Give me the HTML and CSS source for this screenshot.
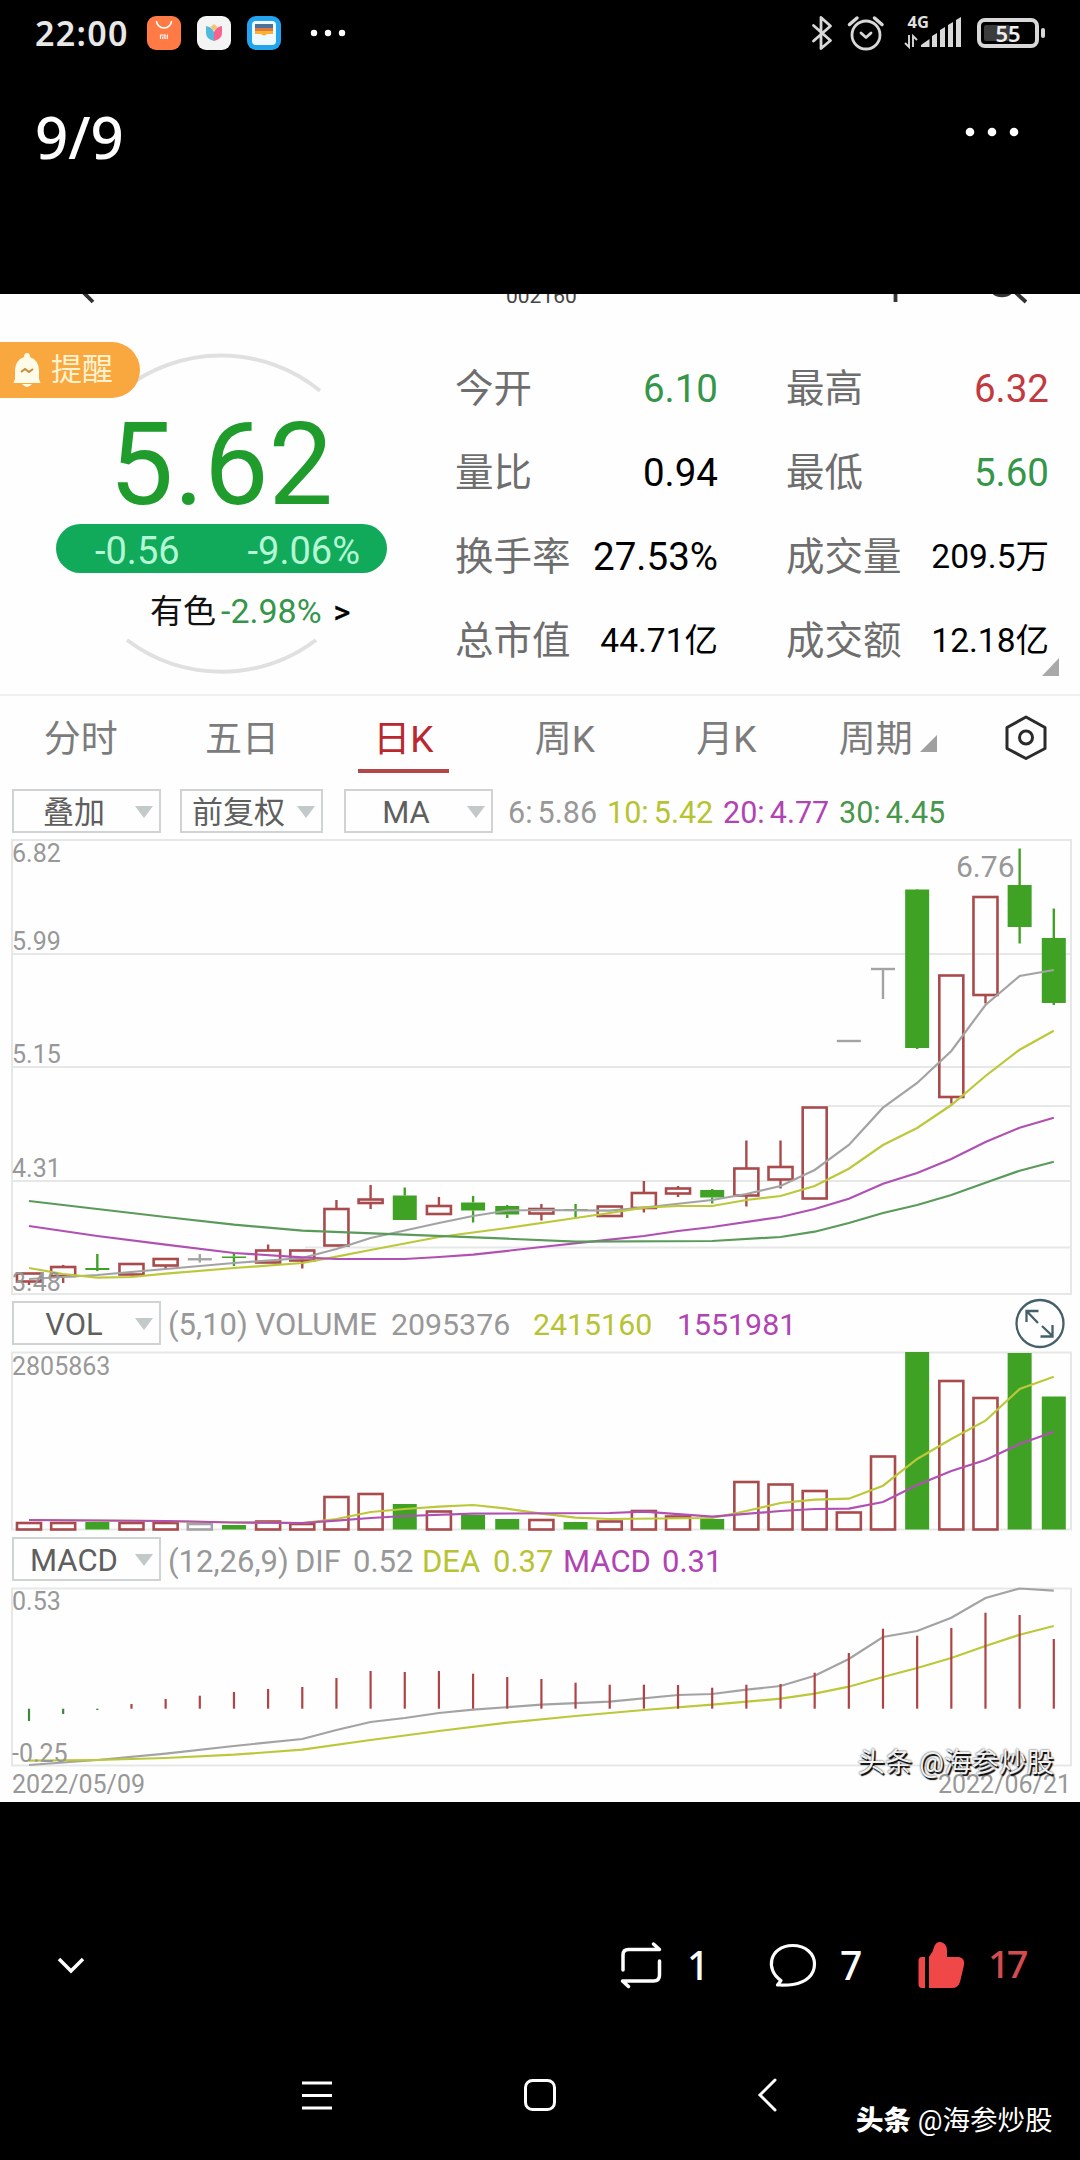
FILE: index.html
```html
<!DOCTYPE html>
<html lang="zh-CN">
<head>
    <meta charset="UTF-8">
    <meta name="viewport" content="width=device-width, initial-scale=1.0">
    <title>002160 日K</title>
    <link rel="stylesheet" href="styles.css">
</head>
<body>

    <!-- Barra de estado -->
    <div class="status-bar">
        <span class="clock">22:00</span>
        <svg class="apps" width="210" height="40" viewBox="140 13 210 40">
            <rect x="147" y="16" width="34" height="34" rx="9" fill="#ff7a45"/>
            <path d="M156.500 21a7.500 7 0 0 0 15 0" fill="none" stroke="#fff" stroke-width="1.600"/>
            <path d="M160.500 39v-4h4.500v4M162.800 36.500v2.500M167.300 34.500v4.500" fill="none" stroke="#fff" stroke-width="1.200"/>
            <rect x="197" y="16" width="34" height="34" rx="9" fill="#f4f4f4"/>
            <path d="M206 26q6 1 8 6v9q-8-2-8-8z" fill="#52b9dd"/>
            <path d="M222 26q-6 1-8 6v9q8-2 8-8z" fill="#f9628e"/>
            <path d="M210.500 27l3.500-3 3.500 3-3.500 4z" fill="#f6c56b"/>
            <rect x="247" y="16" width="34" height="34" rx="9" fill="#22a4ef"/>
            <rect x="252" y="21" width="24" height="24" rx="4" fill="#eefaff"/>
            <path d="M255 24h18v4h-18z" fill="#4f6f9c"/>
            <path d="M255 28h18v3h-18z" fill="#d97b3a"/>
            <path d="M255 31h18v3h-6q-3 3-6 0h-6z" fill="#fbb12f"/>
            <g fill="#fff"><circle cx="314" cy="33" r="3.200"/><circle cx="328" cy="33" r="3.200"/><circle cx="342" cy="33" r="3.200"/></g>
        </svg>
        <svg class="system" width="250" height="40" viewBox="800 13 250 40">
            <g fill="none" stroke="#d8d8d8" stroke-width="2.800" stroke-linecap="round" stroke-linejoin="round">
                <path d="M813.500 25.500l17 15-9.500 8v-31l9.500 8.500-17 15"/>
                <circle cx="866" cy="35" r="14"/>
                <path d="M861 33l5 4.500 5-4.500"/>
                <path d="M849.500 24.500l7.500-6.500M874.500 18l7.500 6.500" stroke-width="3.500"/>
            </g>
            <text class="net" x="907.500" y="28">4G</text>
            <path d="M909 35v12l-4-4M913 47V36l4 4" fill="none" stroke="#d8d8d8" stroke-width="1.900"/>
            <path d="M921 47v-2l8.500-6v8zM932 47V36l5-3v14zM940 47V30l5-3v20zM948 47V25l5-3v25zM956 47V20l5-3v30z" fill="#d8d8d8"/>
            <rect x="979" y="20" width="58" height="26" rx="6" fill="none" stroke="#d8d8d8" stroke-width="4"/>
            <rect x="984" y="25" width="26" height="16" rx="2" fill="#3c3c3c"/>
            <rect x="1041" y="28" width="4" height="10" rx="2" fill="#d8d8d8"/>
            <text class="battery" x="1008" y="42">55</text>
        </svg>
    </div>

    <div class="viewer-head">
        <span class="page-count">9/9</span>
        <svg width="60" height="20" viewBox="962 122 60 20" fill="#fff">
            <circle cx="970" cy="132" r="4.300"/><circle cx="992" cy="132" r="4.300"/><circle cx="1014" cy="132" r="4.300"/>
        </svg>
    </div>

    <div class="panel">
        <svg class="nav-cut" width="1080" height="12" viewBox="0 294 1080 12">
            <path d="M83 292l10 10M895.500 290v12M1014 291l12 11" fill="none" stroke="#333" stroke-width="3.800"/>
            <circle cx="1002" cy="282" r="13.500" fill="none" stroke="#333" stroke-width="3.500"/>
            <text x="506" y="303">002160</text>
        </svg>

        <div class="summary">
            <div class="quote">
                <svg class="ring" width="440" height="400" viewBox="0 294 440 400" fill="none" stroke="#e0e0e0" stroke-width="4">
                    <path d="M122 391.700A157 157 0 0 1 320 391.700M127 641A157 157 0 0 0 316 641"/>
                </svg>
                <div class="remind">
                    <svg width="28" height="36" viewBox="13 352 28 36">
                        <path d="M27 353q3 0 3 4 9 3 9 14v8l1.500 4h-27l1.500-4v-8q0-11 9-14 0-4 3-4zM22 384h10q-5 6-10 0z" fill="#fffbe9"/>
                        <path d="M21 372l4-3 4 3 4-3" fill="none" stroke="#c98a35" stroke-width="2"/>
                    </svg>
                    <span>提醒</span>
                </div>
                <div class="price">5.62</div>
                <div class="change"><span>-0.56</span><span>-9.06%</span></div>
                <div class="sector">有色<span class="down">-2.98%</span><b>&gt;</b></div>
            </div>
            <div class="stats">
                <label>今开</label><span class="down">6.10</span>
                <label>最高</label><span class="up">6.32</span>
                <label>量比</label><span>0.94</span>
                <label>最低</label><span class="down">5.60</span>
                <label>换手率</label><span>27.53%</span>
                <label>成交量</label><span class="small">209.5万</span>
                <label>总市值</label><span class="small">44.71亿</span>
                <label>成交额</label><span class="small">12.18亿</span>
                <i class="corner"></i>
            </div>
        </div>

        <div class="tabs">
            <div class="tab">分时</div>
            <div class="tab">五日</div>
            <div class="tab active">日K</div>
            <div class="tab">周K</div>
            <div class="tab">月K</div>
            <div class="tab">周期<i class="tri"></i></div>
            <svg width="48" height="48" viewBox="1002 713 48 48" fill="none" stroke="#2b2b2b" stroke-width="3" stroke-linejoin="round">
                <path d="M1026 717l19 10.500v21l-19 10-19-10v-21z"/><circle cx="1026" cy="737.500" r="6.500"/>
            </svg>
        </div>

        <div class="indicator ma">
            <div class="select">叠加</div>
            <div class="select wide">前复权</div>
            <div class="select">MA</div>
            <div class="values">
                <span class="gray">6: 5.86</span><span class="yellow">10: 5.42</span><span class="purple">20: 4.77</span><span class="green">30: 4.45</span>
            </div>
        </div>
        <svg class="chart" id="kline" width="1080" height="456" viewBox="0 839 1080 456"></svg>

        <div class="indicator vol">
            <div class="select">VOL</div>
            <div class="values">
                <span class="gray">(5,10) VOLUME</span><span class="gray">2095376</span><span class="yellow">2415160</span><span class="purple">1551981</span>
            </div>
            <svg class="expand" width="52" height="52" viewBox="1014 1297 52 52" fill="none" stroke="#45606b" stroke-width="2.300">
                <circle cx="1040" cy="1323.500" r="23.500"/>
                <path d="M1038 1323l-11-11.500M1026.500 1322v-11h12M1042 1326l11 10.500M1052.500 1325v11.500h-12"/>
            </svg>
        </div>
        <svg class="chart" id="volume" width="1080" height="180" viewBox="0 1351 1080 180"></svg>

        <div class="indicator macd">
            <div class="select">MACD</div>
            <div class="values">
                <span class="gray">(12,26,9)</span><span class="gray">DIF</span><span class="gray">0.52</span><span class="yellow">DEA</span><span class="yellow">0.37</span><span class="purple">MACD</span><span class="purple">0.31</span>
            </div>
        </div>
        <svg class="chart" id="macd" width="1080" height="180" viewBox="0 1587 1080 180"></svg>

        <div class="dates"><span>2022/05/09</span><span>2022/06/21</span></div>
        <div class="mark-inner">头条 @海参炒股</div>
    </div>

    <div class="actions">
        <svg class="down-arrow" width="34" height="24" viewBox="54 1953 34 24" fill="none" stroke="#fff" stroke-width="3.500">
            <path d="M59 1959l12 12 12-12"/>
        </svg>
        <svg width="46" height="50" viewBox="618 1939 46 50" fill="none" stroke="#fff" stroke-width="3.500" stroke-linecap="round" stroke-linejoin="round">
            <path d="M623 1969v-15q0-5.500 5.500-5.500H659.500l-6-5.500M659.500 1960v14q0 6-6 6h-31l6 5.500"/>
        </svg>
        <span class="n1">1</span>
        <svg width="50" height="50" viewBox="768 1939 50 50" fill="none" stroke="#fff" stroke-width="3.200" stroke-linejoin="round">
            <path d="M781 1979.500C765 1969 769 1945 792.500 1944.500 806 1944.500 814.500 1953 814.500 1963 814.500 1974 806 1981.500 793 1983.500 787 1984.300 781.500 1984 777.500 1984z"/>
        </svg>
        <span class="n2">7</span>
        <svg width="50" height="50" viewBox="916 1937 50 50" fill="#f04848">
            <path d="M925 1954v31h-3q-3.500 0-3.500-4v-23q0-4 3.500-4zM929 1985v-31q4-5 5.500-11 2-4.500 6-4 6 1 6.500 8v7h12q6 1 5 8l-4 17q-2 6-8 6z"/>
        </svg>
        <span class="n3">17</span>
    </div>

    <div class="navbar">
        <svg width="700" height="40" viewBox="200 2075 700 40" fill="none" stroke="#fff" stroke-width="3">
            <path d="M302 2083h30M302 2095.500h30M302 2108h30"/>
            <rect x="525.500" y="2080.500" width="29" height="29" rx="7"/>
            <path d="M775 2080l-15 15 15 15" stroke-linecap="round"/>
        </svg>
        <div class="mark"><b>头条</b> @海参炒股</div>
    </div>

    <script>
        const RED = "#a94a4c", GREEN = "#3fa224", GRAY = "#a3a3a3", YELLOW = "#bcc83a", PURPLE = "#b150b3", DARK = "#5a9a5a", GRID = "#e6e8e8";
        const X0 = 29, STEP = 34.16;

        // tipo, cuerpo superior, cuerpo inferior, mecha superior, mecha inferior, tope de volumen
        const velas = [
            ["r", 1273.5, 1281.5, 1273, 1285, 1523], ["r", 1267, 1276, 1265, 1283, 1523],
            ["g", 1268, 1270, 1254, 1271, 1522], ["r", 1264, 1274.5, 1264, 1275, 1523],
            ["r", 1259, 1265.5, 1259, 1269, 1523], ["n", 1258.5, 1260, 1254, 1262.5, 1524],
            ["g", 1256.5, 1258, 1253, 1266, 1525], ["r", 1250.5, 1262.5, 1244.5, 1263, 1521.5],
            ["r", 1250.5, 1260.5, 1250, 1268.5, 1524], ["r", 1209, 1245.5, 1200, 1246, 1497],
            ["r", 1199.5, 1203, 1185, 1209, 1494], ["g", 1195.5, 1220, 1187.5, 1220, 1504],
            ["r", 1206, 1214, 1197, 1215, 1511.5], ["g", 1202.5, 1210.5, 1196, 1222.5, 1515],
            ["g", 1206, 1214.5, 1205, 1218, 1519], ["r", 1209, 1213.5, 1204, 1220.5, 1520],
            ["g", 1209, 1210.5, 1204, 1217.5, 1522], ["r", 1206.5, 1216, 1206, 1216, 1521.5],
            ["r", 1193, 1208, 1181, 1212.5, 1511], ["r", 1188.5, 1193.5, 1186, 1197, 1516.5],
            ["g", 1190, 1197.5, 1189, 1203.5, 1519], ["r", 1168.5, 1195.5, 1140.5, 1206.5, 1482],
            ["r", 1167, 1179.5, 1140.5, 1188.5, 1484.5], ["r", 1107.5, 1198.5, 1107, 1198, 1491],
            ["n", 1040, 1042, 1041, 1041, 1512.5], ["n", 968, 970, 969, 999, 1456.5],
            ["g", 889.5, 1048, 890, 1049, 1352], ["r", 975.5, 1097, 975, 1103.5, 1381],
            ["r", 897, 995, 897, 1003.5, 1398], ["g", 885, 927, 848.5, 943.5, 1353],
            ["g", 938, 1003, 908.5, 1005, 1396.5]
        ];

        // pares [indice, y]
        const ma6 = [[0,1279],[1,1277],[2,1275],[4,1269],[6,1263],[8,1258],[9,1249],[10,1238],[12,1223],[13,1216],[14,1210.5],[15,1210],[17,1210.7],[18,1207.5],[20,1200],[21,1194],[22,1186],[23,1170],[24,1145],[25,1107.7],[26,1083],[27,1051],[28,1005],[29,976],[30,970]];
        const ma10 = [[0,1268],[1,1274],[2,1277.7],[3,1277],[4,1273.7],[6,1268],[8,1263],[9,1256.7],[10,1250],[12,1237],[14,1228],[16,1218],[17,1213],[18,1207.7],[19,1206],[20,1206],[21,1200],[22,1196],[23,1186],[24,1168.7],[25,1145],[26,1128],[27,1105],[28,1076],[29,1049.7],[30,1030.7]];
        const ma20 = [[0,1226],[2,1236],[4,1244.7],[6,1253],[8,1257.3],[9,1259],[11,1259],[12,1257],[13,1254.7],[15,1247],[17,1239.7],[18,1236],[19,1231],[20,1227],[22,1217],[23,1209],[24,1198.7],[25,1183.7],[26,1173],[27,1159],[28,1142],[29,1127.7],[30,1117.7]];
        const ma30 = [[0,1201],[2,1209],[4,1217],[6,1224.7],[8,1230.7],[11,1234.7],[14,1238.7],[16,1241.7],[20,1241],[22,1237],[23,1231.7],[24,1223],[25,1213],[26,1205],[27,1195],[28,1182.7],[29,1170.7],[30,1161.7]];
        const vol5 = [[0,1520],[4,1521],[6,1522.5],[8,1523],[9,1519],[10,1512],[11,1509],[12,1506.7],[13,1505],[14,1508.7],[15,1513.7],[16,1517.7],[17,1519],[20,1518],[21,1511],[22,1503],[23,1499.7],[24,1498.7],[25,1485.7],[26,1459],[27,1439],[28,1420.7],[29,1389],[30,1376.7]];
        const vol10 = [[0,1520],[4,1521],[6,1522.5],[8,1523],[9,1520.7],[10,1518],[11,1516],[13,1513.7],[17,1513],[18,1511.7],[20,1516.7],[22,1511],[23,1509],[24,1508.7],[25,1502],[26,1485],[27,1471],[28,1460],[29,1444],[30,1431.7]];
        const dif = [[0,1765],[2,1760],[4,1753.7],[6,1746],[8,1739],[9,1730],[10,1722],[11,1718],[12,1713],[13,1709.7],[15,1704.7],[17,1701.7],[19,1695],[20,1694],[21,1689.7],[22,1686],[23,1675.7],[24,1659],[25,1637],[26,1631],[27,1617.7],[28,1598],[29,1588.5],[30,1590.7]];
        const dea = [[0,1760.7],[2,1760],[4,1758],[6,1754.7],[8,1749.7],[10,1740],[12,1731],[14,1722.7],[16,1716],[18,1710],[20,1704.7],[22,1698.7],[23,1693.7],[24,1686.7],[25,1677],[26,1668],[27,1658],[28,1646],[29,1634.7],[30,1626]];
        const barras = [1721,1714,1710,1704,1699,1695.7,1692,1689,1687,1678,1671,1672,1671,1673.7,1677,1679,1682.7,1684.7,1684.7,1685,1687.7,1684.7,1684,1672.7,1653,1628.7,1635.7,1628,1612.7,1615,1639];

        const cx = i => X0 + STEP * i;
        const line = (x1, y1, x2, y2, c, w) => `<line x1="${x1}" y1="${y1}" x2="${x2}" y2="${y2}" stroke="${c}" stroke-width="${w}"/>`;
        const curve = (pts, c) => `<polyline points="${pts.map(p => cx(p[0]) + "," + p[1]).join(" ")}" fill="none" stroke="${c}" stroke-width="2.2"/>`;
        const frame = (y, h) => `<rect x="12" y="${y}" width="1059" height="${h}" fill="none" stroke="${GRID}" stroke-width="2"/>`;
        const label = (x, y, t, cls) => `<text x="${x}" y="${y}" class="${cls || "axis"}">${t}</text>`;

        function box(i, top, bottom, color) {
            if (color === GREEN) {
                return `<rect x="${cx(i) - 12}" y="${top}" width="24" height="${bottom - top}" fill="${color}"/>`;
            }
            return `<rect x="${cx(i) - 12}" y="${top}" width="24" height="${bottom - top}" fill="none" stroke="${color}" stroke-width="2.6"/>`;
        }

        function drawKline() {
            let s = frame(840, 454);
            [954, 1067, 1181].forEach(y => s += line(12, y, 1071, y, GRID, 2));
            s += line(828, 1106, 1071, 1106, GRID, 2) + line(305, 1247.5, 1071, 1247.5, GRID, 2);
            velas.forEach(([t, top, bottom, hi, lo], i) => {
                const c = t === "r" ? RED : t === "g" ? GREEN : GRAY;
                if (t === "n") {
                    s += line(cx(i) - 12, (top + bottom) / 2, cx(i) + 12, (top + bottom) / 2, c, 2.4) + line(cx(i), hi, cx(i), lo, c, 2.4);
                    return;
                }
                s += line(cx(i), hi, cx(i), top, c, 2.4) + line(cx(i), bottom, cx(i), lo, c, 2.4) + box(i, top, bottom, c);
            });
            s += curve(ma6, GRAY) + curve(ma10, YELLOW) + curve(ma20, PURPLE) + curve(ma30, DARK);
            s += label(12, 862, "6.82") + label(12, 950, "5.99") + label(12, 1063, "5.15") + label(12, 1177, "4.31") + label(12, 1291, "3.48");
            s += label(956, 877, "6.76", "peak");
            document.getElementById("kline").innerHTML = s;
        }

        function drawVolume() {
            let s = frame(1352.5, 177);
            velas.forEach((v, i) => {
                let c = v[0] === "g" ? GREEN : RED;
                if (i === 5) c = GRAY;
                s += box(i, v[5], 1529.5, c);
            });
            s += curve(vol5, YELLOW) + curve(vol10, PURPLE) + label(12, 1375, "2805863");
            document.getElementById("volume").innerHTML = s;
        }

        function drawMacd() {
            let s = frame(1588.5, 177) + curve(dif, GRAY) + curve(dea, YELLOW);
            barras.forEach((y, i) => s += line(cx(i), y, cx(i), 1708.7, i < 3 ? "#3b8a3b" : "#b04345", 2.2));
            s += label(12, 1610, "0.53") + label(12, 1762, "-0.25");
            document.getElementById("macd").innerHTML = s;
        }

        drawKline();
        drawVolume();
        drawMacd();
    </script>

</body>
</html>
```
FILE: styles.css
```css
* {
    box-sizing: border-box;
}

body {
    margin: 0;
    width: 1080px;
    height: 2160px;
    overflow: hidden;
    background: #000;
    color: #fff;
    font-family: Roboto, "Noto Sans CJK SC", sans-serif;
}

svg {
    display: block;
    flex: none;
}

.status-bar {
    display: flex;
    height: 66px;
    padding: 13px 30px 0 35px;
}

.clock {
    width: 105px;
    font: 600 34px/40px "Noto Sans", sans-serif;
    letter-spacing: 1.300px;
    color: #e8e8e8;
}

.system {
    margin-left: auto;
}

.net {
    font: bold 16.500px "Noto Sans", sans-serif;
    fill: #e0e0e0;
}

.battery {
    font: 600 22px "Noto Sans", sans-serif;
    fill: #eee;
    text-anchor: middle;
}

.viewer-head {
    display: flex;
    justify-content: space-between;
    height: 228px;
    padding: 56px 58px 0 35px;
}

.page-count {
    margin-top: -25px;
    font: 500 58px/80px "Noto Sans", sans-serif;
}

.panel {
    position: relative;
    height: 1508px;
    background: #fefefe;
    color: #111;
}

.nav-cut text {
    font-size: 21px;
    fill: #444;
}

.summary {
    display: flex;
    height: 388px;
}

.quote {
    position: relative;
    width: 455px;
    padding-top: 36px;
}

.ring {
    position: absolute;
    left: 0;
    top: -13px;
}

.remind {
    position: relative;
    display: flex;
    align-items: center;
    width: 140px;
    height: 56px;
    padding-left: 13px;
    gap: 10px;
    border-radius: 0 28px 28px 0;
    background: #f8a83e;
    color: #fff2cf;
    font-size: 31px;
    line-height: 52px;
}

.price {
    position: relative;
    margin: 17px 0 0 109px;
    font-size: 115px;
    line-height: 100px;
    color: #1f9c2c;
}

.change {
    position: relative;
    display: flex;
    justify-content: space-between;
    width: 331px;
    height: 49px;
    margin: 9px 0 0 56px;
    padding: 0 27px 0 39px;
    border-radius: 25px;
    background: #10aa5a;
    color: #b5f7d5;
    font-size: 38px;
    line-height: 54px;
}

.sector {
    position: relative;
    display: flex;
    align-items: baseline;
    margin: 18px 0 0 150px;
    font-size: 33px;
    line-height: 40px;
}

.sector span {
    margin-left: 5px;
    font-size: 34px;
}

.sector b {
    margin-left: 12px;
    font-size: 32px;
    font-weight: 400;
    color: #000;
    -webkit-text-stroke: 0.600px #000;
}

.down {
    color: #35964a;
}

.up {
    color: #c2393f;
}

.stats {
    position: relative;
    display: grid;
    grid-template-columns: 130px 133px 200px 131px;
    grid-auto-rows: 84px;
    width: 594px;
    padding-top: 41px;
    font-size: 38.500px;
    line-height: 84px;
    white-space: nowrap;
    color: #000;
}

.stats label {
    color: #6e6e6e;
}

.stats label:nth-of-type(even) {
    margin-left: 68px;
}

.stats span {
    justify-self: end;
}

.stats .small {
    font-size: 33.500px;
}

.corner {
    position: absolute;
    left: 587px;
    top: 352px;
    border-left: 17px solid transparent;
    border-bottom: 18px solid #a9a9a9;
}

.tabs {
    display: grid;
    grid-template-columns: repeat(6, 161.400px) 1fr;
    align-items: center;
    height: 88px;
    border-top: 2px solid #f0f0f0;
}

.tabs svg {
    justify-self: center;
    margin: -4px 0 0 4px;
}

.tab {
    height: 86px;
    text-align: center;
    font-size: 37px;
    line-height: 88px;
    color: #7c7c7c;
}

.active {
    color: #b8282e;
}

.active::after {
    content: "";
    display: block;
    width: 91px;
    height: 4px;
    margin: -15px auto 0;
    background: #b5474a;
}

.tri {
    display: inline-block;
    margin-left: 7px;
    border-left: 17px solid transparent;
    border-bottom: 17px solid #a0a0a0;
}

.indicator {
    display: flex;
    align-items: center;
    padding-left: 12px;
    height: 56px;
    font-size: 31px;
    line-height: 43px;
}

.ma {
    height: 57px;
}

.select {
    position: relative;
    width: 149px;
    height: 44px;
    margin-right: 19px;
    padding-right: 25px;
    border: 2px solid #d0d3d3;
    text-align: center;
    color: #5f5f5f;
}

.select.wide {
    width: 143px;
    padding-right: 26px;
    margin-right: 21px;
}

.select::after {
    content: "";
    position: absolute;
    right: 6px;
    top: 15px;
    border: 9px solid transparent;
    border-top: 12px solid #c3c8c8;
    border-bottom: 0;
}

.values {
    display: grid;
    white-space: nowrap;
}

.ma .values {
    grid-template-columns: 99px 116px 116px 116px;
    margin-left: -4px;
    padding-top: 4px;
    font-size: 30.500px;
    word-spacing: -2.500px;
}

.vol .select,
.macd .select {
    margin-right: 7px;
}

.vol .values {
    grid-template-columns: 223px 142px 144px 120px;
    padding-top: 3px;
}

.vol .values span + span {
    font-size: 30.300px;
}

.macd .values {
    grid-template-columns: 127px 58px 69px 71px 70px 99px 60px;
    padding-top: 4px;
}

.expand {
    margin: 0 14px 0 auto;
}

.gray {
    color: #989898;
}

.yellow {
    color: #b7c332;
}

.purple {
    color: #b044b2;
}

.green {
    color: #46974a;
}

.axis {
    font-size: 25px;
    fill: #989898;
}

.peak {
    font-size: 30px;
    fill: #989898;
}

.dates {
    display: flex;
    justify-content: space-between;
    padding: 0 9px 0 12px;
    font-size: 25px;
    line-height: 35px;
    color: #989898;
}

.mark-inner {
    position: absolute;
    right: 26px;
    bottom: 21px;
    font-size: 27.500px;
    line-height: 36px;
    color: #f2f2f2;
    text-shadow: 1.500px 2px 1px #000, 0 0 2px #222;
}

.actions {
    display: flex;
    align-items: center;
    height: 198px;
    padding: 128px 0 0 54px;
    font: 500 39px/50px "Noto Sans", sans-serif;
}

.down-arrow {
    margin-right: 530px;
}

.n1 {
    width: 81px;
    margin-left: 23px;
}

.n2 {
    width: 76px;
    margin-left: 22px;
}

.n3 {
    margin: -4px 0 0 22px;
    font-size: 38px;
    letter-spacing: -3px;
    color: #d44c50;
}

.navbar {
    display: flex;
    padding: 75px 24px 0 200px;
}

.mark {
    margin: 26px 0 0 -44px;
    font-size: 27.500px;
    line-height: 40px;
    white-space: nowrap;
}

.mark b {
    font-weight: 900;
}
```
